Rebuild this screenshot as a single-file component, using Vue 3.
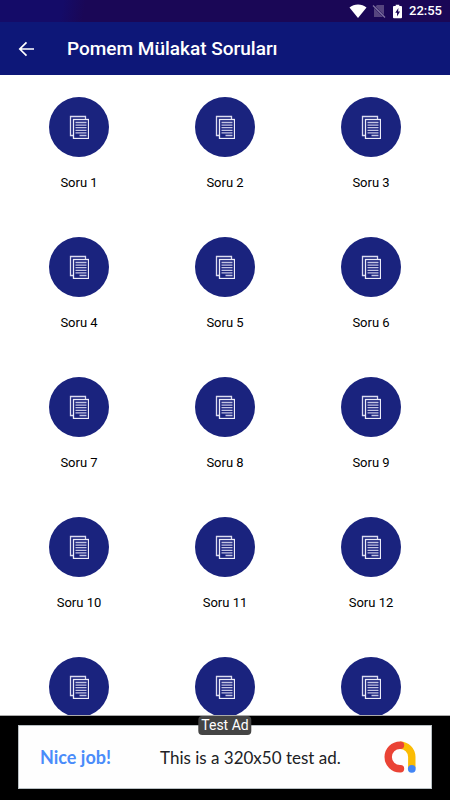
<script setup>
const questions = Array.from({ length: 15 }, (_, i) => ({
  name: `Soru ${i + 1}`,
  captioned: i < 12,
}))
</script>

<template>
  <div class="screen">
    <div class="status">
      <svg class="wifi" viewBox="0 0 18 14" aria-hidden="true">
        <path d="M9 14 0.5 3.6C2.8 1.7 5.8 0.6 9 0.6s6.2 1.1 8.500 3z" fill="#fff" />
      </svg>
      <svg class="sim" viewBox="0 0 14 14" aria-hidden="true">
        <path d="M5 1h7v10L3.500 2.500zM2 4l9 9H2z" fill="#56457f" />
        <path d="M1 1.500 13 13.500" stroke="#8175a3" stroke-width="1.200" />
      </svg>
      <svg class="battery" viewBox="0 0 10 15" aria-hidden="true">
        <path d="M3 0h4v1.500h2q1 0 1 1V14q0 1-1 1H1q-1 0-1-1V2.500q0-1 1-1h2z" fill="#fff" />
        <path d="M6 3.500 2.500 9H4.500v4L7.800 7.500H5.700z" fill="#1a0756" />
      </svg>
      <span class="clock">22:55</span>
    </div>

    <header class="bar">
      <button class="back" type="button" aria-label="Geri">
        <svg viewBox="0 0 16 16" aria-hidden="true">
          <path d="M16 8H2M8.500 1.300 1.800 8 8.500 14.700" fill="none" stroke="#fff" stroke-width="1.700" />
        </svg>
      </button>
      <h1>Pomem Mülakat Soruları</h1>
    </header>

    <main class="grid">
      <button v-for="q in questions" :key="q.name" class="item" type="button" :aria-label="q.name">
        <span class="disc">
          <svg viewBox="0 0 20 24" aria-hidden="true">
            <path d="M4 20.500H1.500V1.500H16.500V4" fill="none" stroke="#dcdcf0" stroke-width="1.300" />
            <rect x="4.500" y="4.500" width="15" height="19" fill="none" stroke="#ececf8" stroke-width="1.300" />
            <path
              d="M6.500 7.500h11M6.500 10.100h11M6.500 12.700h11M6.500 15.300h11M6.500 17.900h11M10.500 20.500h7"
              stroke="#c3c4e2"
              stroke-width="1.300"
            />
          </svg>
        </span>
        <span v-if="q.captioned" class="label">{{ q.name }}</span>
      </button>
    </main>

    <aside class="ad">
      <span class="tag">Test Ad</span>
      <div class="banner">
        <span class="praise">Nice job!</span>
        <span class="message">This is a 320x50 test ad.</span>
        <svg class="logo" viewBox="0 0 32 32" aria-hidden="true">
          <path d="M16 4.200A11.800 11.800 0 0 1 27.800 16V27" fill="none" stroke="#fbbc04" stroke-width="7.400" />
          <path
            d="M16.500 4.200H16A11.800 11.800 0 0 0 16 27.800H16.500"
            fill="none"
            stroke="#ea4335"
            stroke-width="7.400"
            stroke-linecap="round"
          />
          <circle cx="27.800" cy="27.800" r="3.900" fill="#4285f4" />
        </svg>
      </div>
    </aside>
  </div>
</template>

<style>
body {
  margin: 0;
}
</style>

<style scoped>
.screen {
  display: flex;
  flex-direction: column;
  height: 100vh;
  background: #fff;
  font-family: Roboto, "Liberation Sans", sans-serif;
}

button {
  padding: 0;
  border: 0;
  background: none;
  font: inherit;
  color: inherit;
  cursor: pointer;
}

svg {
  display: block;
}

.status {
  display: flex;
  flex: none;
  align-items: center;
  justify-content: flex-end;
  height: 22px;
  padding-right: 8px;
  background: linear-gradient(100deg, #140b68 14%, #1a0756 19%);
  color: #fff;
}

.wifi {
  width: 18px;
  height: 14px;
  margin-right: 5px;
}

.sim {
  width: 14px;
  height: 14px;
  margin-right: 7px;
}

.battery {
  width: 9px;
  height: 15px;
  margin-right: 7px;
}

.clock {
  font-size: 13px;
  font-weight: 500;
  line-height: 24px;
}

.bar {
  display: flex;
  flex: none;
  align-items: center;
  gap: 33px;
  height: 53px;
  padding: 0 18px;
  background: #0d1778;
  color: #fff;
}

.back svg {
  width: 16px;
  height: 16px;
}

h1 {
  margin: 0;
  font-size: 19px;
  font-weight: 500;
  line-height: 24px;
}

.grid {
  display: grid;
  flex: 1;
  grid-template-columns: repeat(3, 1fr);
  grid-auto-rows: 140px;
  min-height: 0;
  padding: 0 6px;
  overflow-y: auto;
  scrollbar-width: none;
}

.item {
  display: flex;
  flex-direction: column;
  align-items: center;
  gap: 16px;
  padding-top: 22px;
}

.disc {
  display: grid;
  place-items: center;
  width: 60px;
  height: 60px;
  border-radius: 50%;
  background: #1a237e;
}

.disc svg {
  width: 20px;
  height: 24px;
}

.label {
  font-size: 13px;
  line-height: 20px;
  color: #000;
}

.ad {
  position: relative;
  flex: none;
  padding: 9px 18px 11px;
  border-top: 1px solid #aaa;
  background: #000;
}

.banner {
  display: flex;
  align-items: center;
  height: 62px;
  padding: 0 15px 0 21px;
  border: 1px solid #b9c0c4;
  background: #fefefe;
  font-family: Lato, "Open Sans", sans-serif;
  font-size: 17px;
}

.praise {
  flex: none;
  width: 120px;
  font-size: 18px;
  font-weight: 700;
  color: #4a8cfa;
}

.message {
  flex: 1;
  white-space: nowrap;
  color: #202124;
}

.logo {
  flex: none;
  width: 32px;
  height: 32px;
}

.tag {
  position: absolute;
  top: 0;
  left: 50%;
  padding: 0 3px;
  border-radius: 4px;
  background: #444;
  color: #fff;
  font-size: 14px;
  line-height: 19px;
  white-space: nowrap;
  transform: translateX(-50%);
}
</style>
